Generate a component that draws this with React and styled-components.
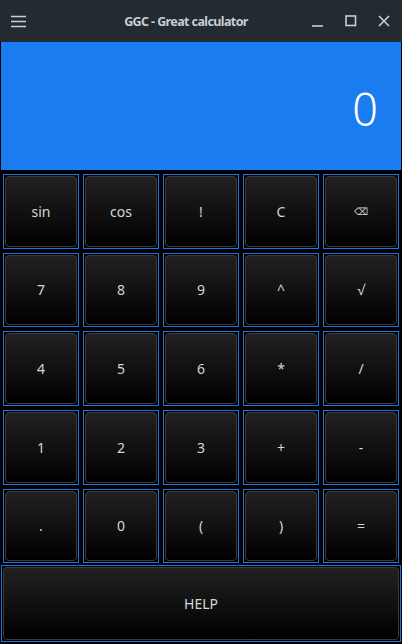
import styled, { createGlobalStyle } from "styled-components";

const Global = createGlobalStyle`
	html, body {
		margin: 0;
		padding: 0;
		background: #000;
	}
	body {
		font-family: "Noto Sans", "Open Sans", sans-serif;
	}
`;

const Window = styled.div`
	width: 402px;
	height: 644px;
	display: flex;
	flex-direction: column;
	background: #000;
	overflow: hidden;
`;

const TitleBar = styled.header`
	height: 42px;
	flex-shrink: 0;
	background: #232a30;
	display: flex;
	align-items: center;
	padding: 0 10px 0 10px;
	box-sizing: border-box;
	color: #c8ced4;
`;

const Title = styled.h1`
	flex: 1;
	margin: 0;
	text-align: center;
	font-size: 12.5px;
	letter-spacing: -0.6px;
	font-weight: 700;
	padding-left: 36px;
`;

const WinButtons = styled.div`
	display: flex;
	align-items: center;
	gap: 17px;
`;

const IconBox = styled.span`
	width: 16px;
	height: 16px;
	display: flex;
	align-items: center;
	justify-content: center;
`;

const Display = styled.div`
	height: 128px;
	margin: 0 1px;
	flex-shrink: 0;
	background: #1a7cf0;
	display: flex;
	align-items: center;
	justify-content: flex-end;
	padding: 4px 23px 0 0;
	box-sizing: border-box;
	color: #fff;
	font-size: 45px;
	font-weight: 300;
`;

const Pad = styled.div`
	flex: 1;
	display: grid;
	grid-template-columns: repeat(5, 1fr);
	grid-template-rows: repeat(6, 1fr);
	gap: 4px;
	padding: 4px 3px 2px 3px;
`;

const Key = styled.button`
	border: 1px solid #1f74e0;
	padding: 1px;
	margin: ${(p) => (p.$wide ? "-2px -2px 0" : "0")};
	grid-column: ${(p) => (p.$wide ? "1 / -1" : "auto")};
	background: #000;
	font-family: inherit;
	cursor: pointer;
	display: flex;

	span {
		flex: 1;
		display: flex;
		align-items: center;
		justify-content: center;
		border: 1px solid #3a3a3a;
		border-radius: 4px;
		background: linear-gradient(#212121, #000);
		color: #d6d6d6;
		font-size: 14px;
	}
`;

const keys = ["sin", "cos", "!", "C", "⌫", "7", "8", "9", "^", "√", "4", "5", "6", "*", "/", "1", "2", "3", "+", "-", ".", "0", "(", ")", "="];

const App = () => {
	return (
		<Window>
			<Global />
			<TitleBar>
				<IconBox>
					<svg width="15" height="13" viewBox="0 0 15 13">
						<path d="M0 1.5h15M0 6.5h15M0 11.5h15" stroke="#c8ced4" strokeWidth="1.6" />
					</svg>
				</IconBox>
				<Title>GGC - Great calculator</Title>
				<WinButtons>
					<IconBox>
						<svg width="12" height="12" viewBox="0 0 12 12">
							<path d="M0 11h11" stroke="#c8ced4" strokeWidth="1.6" />
						</svg>
					</IconBox>
					<IconBox>
						<svg width="12" height="12" viewBox="0 0 12 12">
							<rect x="1" y="1" width="9.5" height="9.5" fill="none" stroke="#c8ced4" strokeWidth="1.6" />
						</svg>
					</IconBox>
					<IconBox>
						<svg width="12" height="12" viewBox="0 0 12 12">
							<path d="M1 1l10 10M11 1L1 11" stroke="#c8ced4" strokeWidth="1.6" />
						</svg>
					</IconBox>
				</WinButtons>
			</TitleBar>
			<Display>0</Display>
			<Pad>
				{keys.map((k) => (
					<Key key={k}>
						<span style={k === "⌫" ? { fontSize: 10 } : undefined}>{k}</span>
					</Key>
				))}
				<Key $wide>
					<span>HELP</span>
				</Key>
			</Pad>
		</Window>
	);
};

export default App;
